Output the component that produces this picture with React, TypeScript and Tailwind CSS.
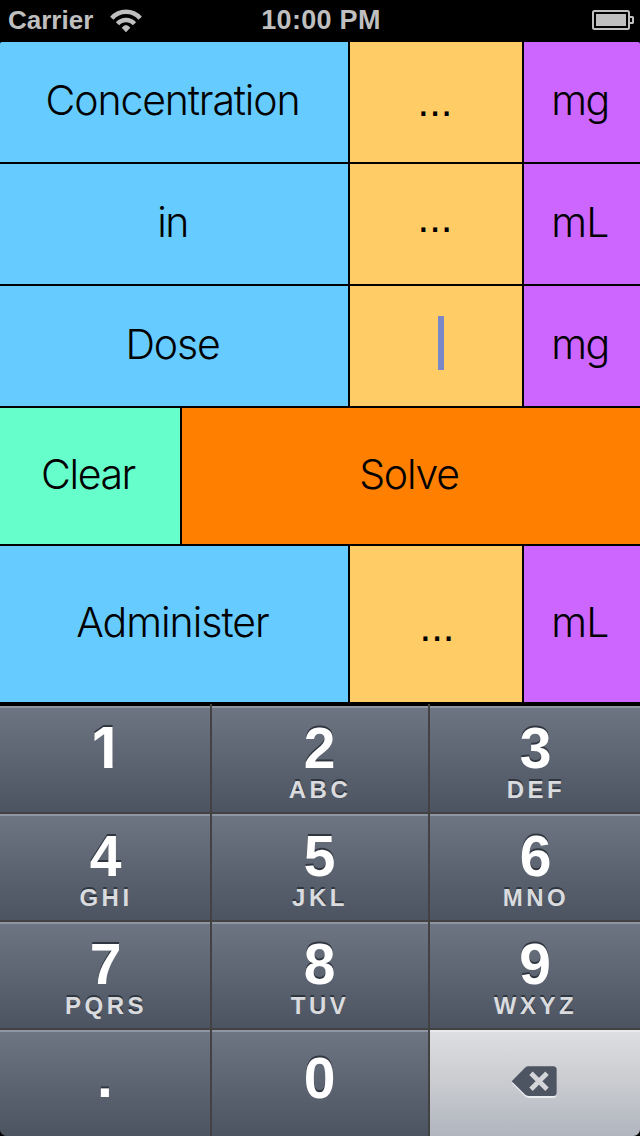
import { ReactNode } from "react";

const label =
  "font-['Inter','Liberation_Sans',sans-serif] font-light text-[41px] leading-none whitespace-nowrap text-black";

function Name({ children, className }: { children: ReactNode; className: string }) {
  return (
    <div className="flex w-[348px] items-center justify-center bg-[#66ccff] pr-[3px] pb-[3px]">
      <span className={`${label} ${className}`}>{children}</span>
    </div>
  );
}

function Unit({ children, className }: { children: ReactNode; className: string }) {
  return (
    <div className="flex w-[116px] items-center justify-center bg-[#cc66ff] pr-1 pb-[3px]">
      <span className={`${label} ${className}`}>{children}</span>
    </div>
  );
}

function Value({ children, className = "pr-[2px]" }: { children: ReactNode; className?: string }) {
  return (
    <div
      className={`flex w-[172px] items-center justify-center bg-[#ffcc66] font-['Liberation_Sans',sans-serif] text-[42px] leading-none text-black ${className}`}
    >
      {children}
    </div>
  );
}

function Key({ digit, letters, className = "" }: { digit: string; letters?: string; className?: string }) {
  return (
    <button
      className={`flex flex-col items-center border-t-2 border-[#8f96a3] bg-linear-to-b from-[#6e7582] to-[#4d5461] font-['Liberation_Sans',sans-serif] font-bold ${className}`}
    >
      <span
        className={`leading-[50px] text-white [text-shadow:0_-2px_0_#303640] ${
          digit === "1" ? "font-['Inter','Liberation_Sans',sans-serif] text-[56px]" : "text-[57px]"
        }`}
      >
        {digit}
      </span>
      {letters && (
        <span className="mt-[3px] pl-px text-[24px] leading-[28px] tracking-[3.5px] text-[#d9dbde] [text-shadow:0_-2px_0_#303640]">
          {letters}
        </span>
      )}
    </button>
  );
}

function Wifi() {
  return (
    <svg width="34" height="26" viewBox="109 6 34 26" fill="none" stroke="#bfbfbf" strokeWidth="4.4">
      <path d="M111.8 17.2A19 19 0 0 1 140.2 17.2" />
      <path d="M117.5 22.8A11.3 11.3 0 0 1 134.5 22.8" />
      <path d="M121.7 26.8Q126 21 130.3 26.8L126 31.2Z" fill="#bfbfbf" stroke="none" />
    </svg>
  );
}

function Battery() {
  return (
    <svg width="42" height="20" viewBox="0 0 42 20" fill="none" stroke="#bfbfbf" strokeWidth="2">
      <rect x="1" y="1" width="36" height="18" rx="1.5" />
      <rect x="4" y="4" width="30" height="12" fill="#bfbfbf" stroke="none" />
      <path d="M38 7H40.5Q41 7 41 7.5V12.5Q41 13 40.5 13H38" />
    </svg>
  );
}

function Backspace() {
  return (
    <svg width="48" height="34" viewBox="510 1065 48 34">
      <path
        d="M512 1083.2L525 1069.7Q526.5 1068.3 528.5 1068.3H553Q556.5 1068.3 556.5 1071.8V1094.5Q556.5 1098 553 1098H528.5Q526.5 1098 525 1096.6Z"
        fill="#e9ebee"
      />
      <path
        d="M511.7 1081.2L525 1067.7Q526.5 1066.3 528.5 1066.3H553.2Q556.7 1066.3 556.7 1069.8V1092.5Q556.7 1096 553.2 1096H528.5Q526.5 1096 525 1094.6Z"
        fill="#4d5462"
      />
      <path d="M531 1073.3L547 1089.3M547 1073.3L531 1089.3" stroke="#d3d5d9" strokeWidth="4.8" />
    </svg>
  );
}

export default function App() {
  return (
    <div className="flex h-[1136px] w-[640px] flex-col overflow-hidden bg-black">
      <header className="grid h-[42px] shrink-0 grid-cols-3 items-center px-2 pb-[3px] font-['Liberation_Sans',sans-serif] text-[26px] leading-none font-bold text-[#bfbfbf]">
        <div className="flex items-center gap-[16px]">
          <span>Carrier</span>
          <Wifi />
        </div>
        <span className="pt-[2px] pl-[2px] text-center text-[27px] tracking-[0.3px] whitespace-nowrap">10:00 PM</span>
        <div className="-mr-[2px] flex justify-end">
          <Battery />
        </div>
      </header>

      <main className="flex h-[660px] shrink-0 flex-col gap-[2px] overflow-hidden rounded-t-[2px]">
        <div className="flex h-[120px] gap-[2px]">
          <Name className="tracking-[-1.15px]">Concentration</Name>
          <Value>...</Value>
          <Unit className="tracking-[-1.5px]">mg</Unit>
        </div>
        <div className="flex h-[120px] gap-[2px]">
          <Name className="tracking-[-1.5px]">in</Name>
          <Value className="pr-[2px] pb-[13px]">...</Value>
          <Unit className="tracking-[-0.8px]">mL</Unit>
        </div>
        <div className="flex h-[120px] gap-[2px]">
          <Name className="tracking-[-1.2px]">Dose</Name>
          <Value className="pb-1.5 pl-[10px]">
            <span className="h-[54px] w-1.5 bg-[#7b88c8]" />
          </Value>
          <Unit className="tracking-[-1.5px]">mg</Unit>
        </div>
        <div className="flex h-[136px] gap-[2px]">
          <button className="flex w-[180px] items-center justify-center bg-[#66ffcc] pr-1 pb-[3px]">
            <span className={`${label} tracking-[-1.4px]`}>Clear</span>
          </button>
          <button className="flex w-[458px] items-center justify-center bg-[#ff8000] pr-1 pb-[3px]">
            <span className={`${label} tracking-[-1.2px]`}>Solve</span>
          </button>
        </div>
        <div className="flex h-[156px] gap-[2px]">
          <Name className="tracking-[-1px]">Administer</Name>
          <Value className="pt-[5px] pl-[2px]">...</Value>
          <Unit className="tracking-[-0.8px]">mL</Unit>
        </div>
      </main>

      <div className="mt-[2px] h-[432px] shrink-0 overflow-hidden rounded-b-[7px] bg-[#424242]">
        <div className="grid grid-cols-[210px_2px_216px_2px_210px]">
          <div className="h-[2px] bg-black" />
          <div />
          <div className="h-[2px] bg-black" />
          <div />
          <div className="h-[2px] bg-black" />
        </div>
        <div className="grid h-[430px] grid-cols-[210px_216px_210px] grid-rows-[106px_106px_106px_106px] gap-[2px]">
          <Key digit="1" className="pt-[15px] pr-[2px]" />
          <Key digit="2" letters="ABC" className="pt-[15px] pr-px" />
          <Key digit="3" letters="DEF" className="pt-[15px] pl-px" />
          <Key digit="4" letters="GHI" className="pt-[15px] pl-px" />
          <Key digit="5" letters="JKL" className="pt-[15px] pr-px" />
          <Key digit="6" letters="MNO" className="pt-[15px] pl-px" />
          <Key digit="7" letters="PQRS" className="pt-[15px] pl-px" />
          <Key digit="8" letters="TUV" className="pt-[15px] pr-px" />
          <Key digit="9" letters="WXYZ" className="pt-[15px]" />
          <Key digit="." className="pt-[20px]" />
          <Key digit="0" className="pt-[21px] pr-px" />
          <button
            aria-label="Delete"
            className="flex items-center justify-center border-t-2 border-[#e8e9ec] bg-linear-to-b from-[#dcdee1] via-[#c9cbcf] to-[#b1b5bf] pr-[2px] pb-1"
          >
            <Backspace />
          </button>
        </div>
      </div>
    </div>
  );
}
